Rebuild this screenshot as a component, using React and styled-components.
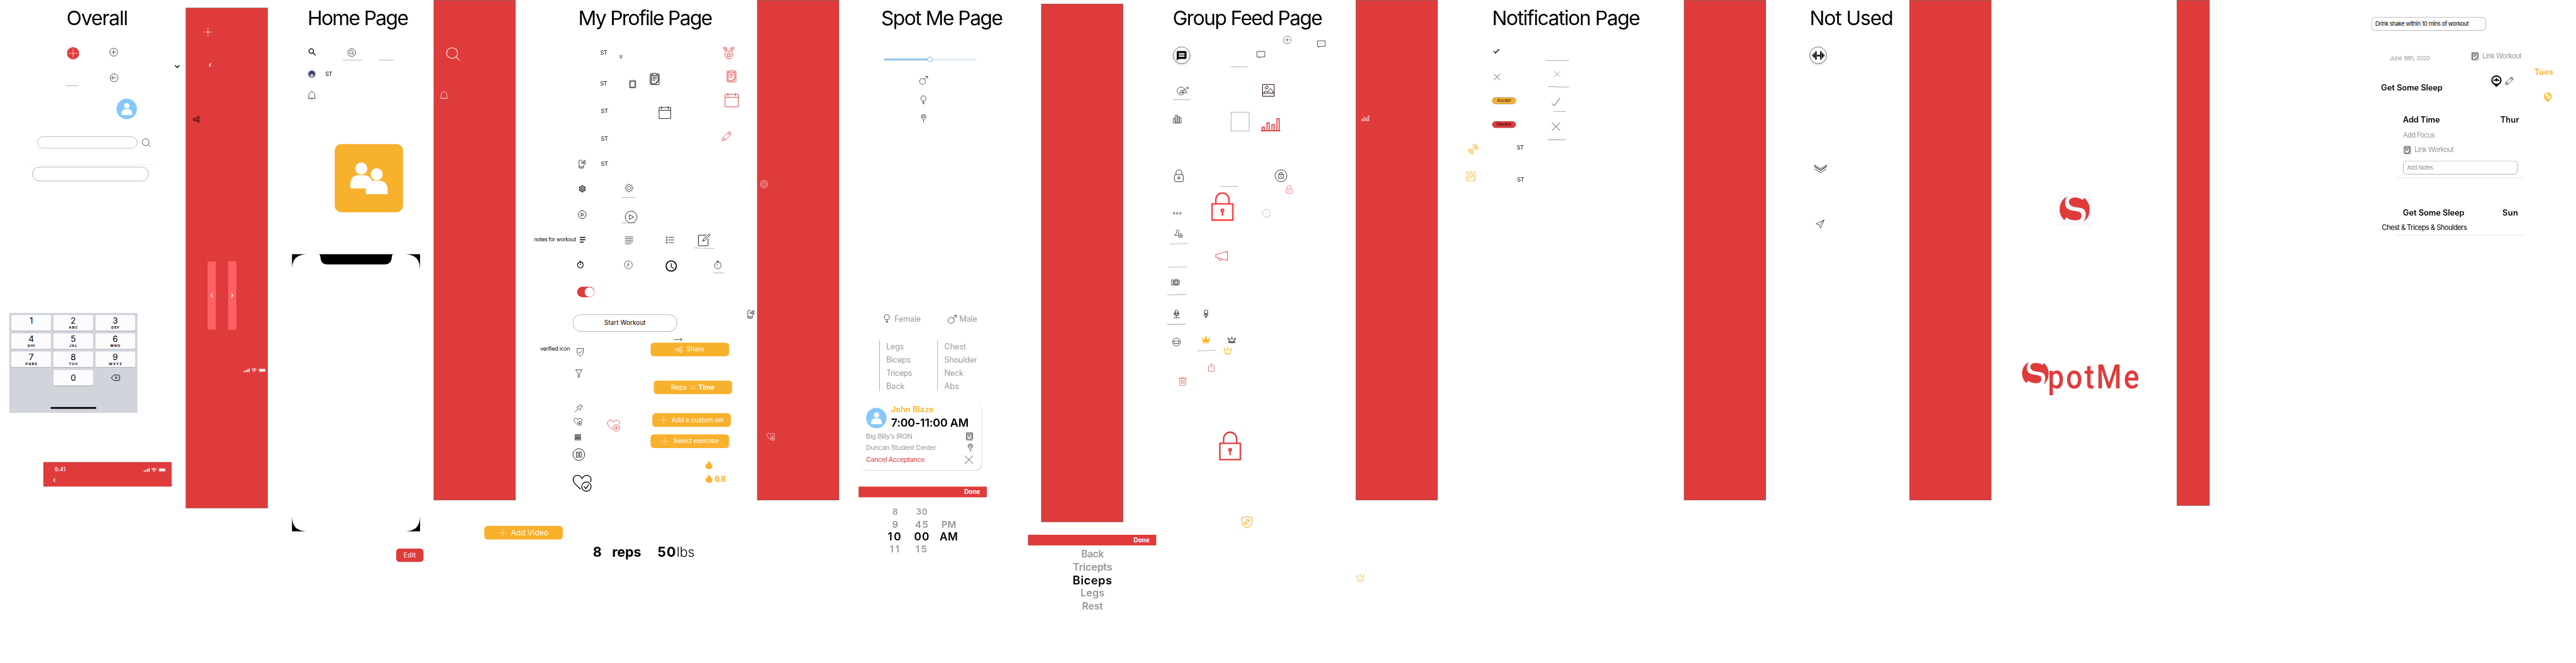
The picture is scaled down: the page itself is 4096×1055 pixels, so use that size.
import React, { useLayoutEffect, useRef, useState } from "react";
import styled, { createGlobalStyle } from "styled-components";
import { MdSearch, MdMessage, MdOutlineSettings, MdOutlineTimer } from "react-icons/md";

const SCALE = 4096 / 7543;
const RED = "#df3b3b";
const HOT = "#ff3b3b";
const GOLD = "#f8b12d";
const AMBER = "#fdb50a";
const GREY = "#979797";
const LINE = "#707070";
const SKY = "#85c8f9";

const Global = createGlobalStyle`
  html, body { margin: 0; padding: 0; background: #fff; overflow: hidden; }
  * { box-sizing: border-box; }
`;

const Window = styled.main`
  width: 4096px;
  height: 1055px;
  overflow: hidden;
  background: #fff;
`;

const Canvas = styled.div`
  position: relative;
  width: 7543px;
  height: 1942px;
  transform: scale(${SCALE});
  transform-origin: 0 0;
  font-family: Inter, "Liberation Sans", sans-serif;
  color: #000;
`;

/* ---------- text ---------- */

const Type = styled.span`
  display: inline-block;
  flex: none;
  white-space: pre;
  line-height: 1;
  font-family: ${(p) => p.$font || "inherit"};
  font-size: ${(p) => p.$size}px;
  font-weight: ${(p) => p.$weight};
  color: ${(p) => p.$color};
  transform-origin: 0 50%;
`;

const PlacedType = styled(Type)`
  position: absolute;
  left: ${(p) => p.$x - p.$size * 0.07}px;
  top: ${(p) => p.$base - p.$size * 0.864}px;
`;

/* A run of text tracked so that its letters span the width given. */
function Text({ x, base, size: nominal, w, weight = 400, color = "#000", font, children }) {
  const size = nominal * 1.03;
  const ref = useRef(null);
  const [tracking, setTracking] = useState(0);
  useLayoutEffect(() => {
    if (!w || children.length < 2) return;
    ref.current.style.letterSpacing = "0px";
    const natural = ref.current.getBoundingClientRect().width / SCALE;
    const next = (w + size * 0.13 - natural) / (children.length - 1);
    ref.current.style.letterSpacing = next + "px";
    setTracking(next);
  }, [w, size, children]);
  const Tag = x === undefined ? Type : PlacedType;
  return (
    <Tag ref={ref} $x={x} $base={base} $size={size} $weight={weight} $color={color} $font={font} style={{ letterSpacing: tracking }}>
      {children}
    </Tag>
  );
}

const Title = (p) => <Text size={57} base={74} {...p} />;
const ST = ({ x, base }) => <Text x={x} base={base} size={16.5} w={18.5}>ST</Text>;

/* ---------- shapes on the canvas ---------- */

const Placed = styled.div`
  position: absolute;
  left: ${(p) => p.$x}px;
  top: ${(p) => p.$y}px;
`;

const Band = styled(Placed)`
  width: ${(p) => p.$w || 240}px;
  height: ${(p) => p.$h || 1466}px;
  background: ${RED};
  border: 1px solid ${LINE};
`;

const Rule = styled(Placed)`
  width: ${(p) => p.$w}px;
  height: ${(p) => p.$t || 1}px;
  background: ${(p) => p.$c || LINE};
  transform: rotate(${(p) => p.$r || 0}deg);
`;

const Pill = styled(Placed)`
  display: flex;
  align-items: center;
  justify-content: ${(p) => p.$align || "center"};
  width: ${(p) => p.$w}px;
  height: ${(p) => p.$h}px;
  padding: ${(p) => p.$pad || 0};
  border: 1px solid ${(p) => p.$c || LINE};
  border-radius: ${(p) => p.$r}px;
  background: ${(p) => p.$bg || "#fff"};
`;

const Disc = styled(Placed)`
  width: ${(p) => p.$d}px;
  height: ${(p) => p.$d}px;
  border-radius: 50%;
  border: 1px solid #000;
  background: #fff;
  box-shadow: 0 3px 6px rgba(0, 0, 0, 0.16);
`;

const Lighter = styled(Placed)`
  display: flex;
  align-items: center;
  justify-content: center;
  width: 24px;
  height: 200px;
  background: #ff6262;
`;

const Glyph = styled.svg`
  position: ${(p) => (p.$flow ? "static" : "absolute")};
  left: ${(p) => p.$x}px;
  top: ${(p) => p.$y}px;
  width: ${(p) => p.$w}px;
  height: ${(p) => p.$h}px;
  flex: none;
  overflow: visible;
  fill: none;
  stroke: ${(p) => p.$c};
  stroke-width: ${(p) => p.$sw};
  color: ${(p) => p.$c};
`;

const PackIcon = styled(Placed)`
  display: flex;
  font-size: ${(p) => p.$s}px;
`;

function Icon({ of, x, y, w, h, c = "#000", sw = 1.1 }) {
  const [vw, vh, art] = of;
  return (
    <Glyph $flow={x === undefined} $x={x} $y={y} $w={w} $h={h} $c={c} $sw={sw * 1.15} viewBox={`0 0 ${vw} ${vh}`} preserveAspectRatio="none">
      {art}
    </Glyph>
  );
}

/* ---------- icon drawings: [width, height, art] ---------- */

const teeth = (n, outer, inner) => {
  const pts = [];
  for (let i = 0; i < n; i++) {
    [[-7, outer], [7, outer], [15, inner], [(360 / n) - 15, inner]].forEach(([d, r]) => {
      const a = ((i * 360) / n + d - 90) * (Math.PI / 180);
      pts.push(`${(12 + r * Math.cos(a)).toFixed(2)} ${(12 + r * Math.sin(a)).toFixed(2)}`);
    });
  }
  return "M" + pts.join("L") + "Z";
};

const gear = [24, 24, <g strokeLinejoin="round"><path d={teeth(8, 11.6, 8.7)} /><circle cx="12" cy="12" r="4.8" /></g>];
const plus = [24, 24, <path d="M12 0V24M0 12H24" />];
const cross = [24, 24, <path d="M0 0L24 24M24 0L0 24" />];
const tick = [24, 24, <path d="M.3 16L7 23.3L23.7 .3" />];
const boldTick = [18, 13, <path d="M1 7L6 12L17 1" />];
const chevLeft = [8, 12, <path d="M6.5 1L2 6L6.5 11" />];
const chevRight = [8, 12, <path d="M1.5 1L6 6L1.5 11" />];
const chevDown = [16, 10, <path d="M1.5 1.5L8 8L14.5 1.5" />];
const circlePlus = [24, 24, <g><circle cx="12" cy="12" r="11.5" /><path d="M12 5.5V18.5M5.5 12H18.5" /></g>];
const circleBack = [24, 24, <g><circle cx="12" cy="12" r="11.5" /><path d="M18.5 12H5M9.5 6.5L5 12L9.5 17.5" /></g>];
const mag = [26, 26, <g><circle cx="11" cy="11" r="10.4" /><path d="M18.5 18.5L25.5 25.5" /></g>];
const circleMag = [24, 24, <g><circle cx="12" cy="12" r="11.5" /><circle cx="11" cy="11.3" r="5.3" /><path d="M15 15.3L18.7 18.5" /></g>];
const share = [20, 20, <g><circle cx="4.5" cy="10.5" r="3.6" /><circle cx="15.5" cy="4.6" r="3.6" /><circle cx="15.5" cy="15.6" r="3.6" /><path d="M7.8 9L12.2 6.5M7.8 12L12.2 14" /></g>];
const bell = [24, 24, <path d="M0 20.8H24M2 20.8C4.2 19.5 3.5 15 3.5 11C3.5 6.5 6.5 4 9.5 3Q10 .6 12 .6Q14 .6 14.5 3C17.5 4 20.5 6.5 20.5 11C20.5 15 19.8 19.5 22 20.8M9 21Q9.5 23.5 12 23.5Q14.5 23.5 15 21" />];
const board = [28, 36, (
  <g>
    <path d="M9 3H3Q1 3 1 5V33Q1 35 3 35H25Q27 35 27 33V5Q27 3 25 3H19" />
    <path d="M8 6.8H4.3V31.7H18.5L24 26V6.8H20M18.5 31.7V27.5Q18.5 26 20 26H24" />
    <path d="M8 8.5V5.5Q8 4 10 4H11Q11.5 .8 14 .8Q16.5 .8 17 4H18Q20 4 20 5.5V8.5Z" />
    <path d="M7.5 13H20.5M7.5 17.5H20.5M7.5 22H15.5" />
  </g>
)];
const blankBoard = [20, 24, <g><path d="M6 2H2Q.7 2 .7 3.3V22.3Q.7 23.4 2 23.4H18Q19.3 23.4 19.3 22.3V3.3Q19.3 2 18 2H14" /><path d="M2.6 4.5H17.4V21.3H2.6ZM6.5 3Q8 3 8.5 1.5Q10 -.2 11.5 1.5Q12 3 13.5 3" /></g>];
const calendar = [40, 40, <path d="M1 3.2H39V39H1ZM1 12.3H39M9 0V9.5M31 0V9.5" />];
const pencil = [24, 24, <path strokeLinejoin="round" d="M.7 23.3L2.3 15.5L16.5 1.8Q18.5 0 20.5 1.7L22.3 3.5Q24 5.5 22.3 7.3L8.3 21.5ZM2.3 15.5Q4.5 15.5 4.8 18.8Q8 19 8.3 21.5M14.5 3.8L20.2 9.4M16 2.3L21.8 8" />];
const phoneShare = [20, 24, <g><path d="M9.5 .6H2.2Q.7 .6 .7 2.1V21.9Q.7 23.4 2.2 23.4H12.5Q14 23.4 14 21.9V14.5M.7 19.2H14M6.4 21.4H8.4" /><circle cx="10" cy="7.5" r="2.6" /><circle cx="17" cy="3.2" r="2.4" /><circle cx="17" cy="10.3" r="2.4" /><path d="M12.2 6L15 4.6M12.2 8.6L14.8 9.6" /></g>];
const medal = [34, 36, <g><path d="M.8 .5L7 14M4.8 .5L10 12M8.8 .5L12.8 10.5M33.2 .5L27 14M29.2 .5L24 12M25.2 .5L21.2 10.5" /><circle cx="17" cy="24" r="11.2" /><path d="M17 17.5L19 21.8L23.3 22.2L20 25.4L21 30L17 27.6L13 30L14 25.4L10.7 22.2L15 21.8Z" /></g>];
const play = [36, 36, <g strokeLinejoin="round"><circle cx="18" cy="18" r="17.2" /><path d="M13 11V25L26 18Z" /></g>];
const textLines = [24, 22, <path d="M0 1H24M0 6H24M0 11H24M0 16H24M0 21.3H18" />];
const barLines = [16, 17, <path d="M0 1.6H16M0 8.5H16M0 15.4H11" />];
const bullets = [24, 20, <g><circle cx="2.3" cy="2.3" r="1.9" /><circle cx="2.3" cy="10.2" r="1.9" /><circle cx="2.3" cy="18" r="1.9" /><path d="M8 2.3H24M8 10.2H24M8 18H24" /></g>];
const note = [36, 37, <g strokeLinejoin="round"><path d="M23.5 4.2H4Q1 4.2 1 7.2V33Q1 36 4 36H26.5Q29.5 36 29.5 33V15.5" /><path d="M13.8 22.5L16 15.5L30.5 2.5Q32.5 .5 34.2 1.5Q36 3 34.3 5.5L20 19.8Z" /></g>];
const clockThin = [24, 24, <g><circle cx="12" cy="12" r="11.5" /><circle cx="12" cy="12" r="1.6" /><path d="M12 5.5V10.4M10.8 13.2L6 18.5" /></g>];
const clockBold = [32, 32, <g><circle cx="16" cy="16" r="14.5" /><path strokeWidth="2.2" strokeLinecap="round" d="M16 9V18L22.5 22.5" /></g>];
const stopwatch = [20, 24, <g><circle cx="10" cy="14" r="9.5" /><path d="M6.5 .8H13.5M8.3 .8V4.5M11.7 .8V4.5M17 6.5L19 4.8M10 14L5.5 9.5" /></g>];
const arrow = [24, 12, <path d="M0 6H23.3M18 .8L23.3 6L18 11.2" />];
const shield = [20, 24, <path d="M.8 1.2H19.2V9Q19.2 20 10 23.5Q.8 20 .8 9ZM5 12L8.5 15.3L15 7.5" />];
const funnel = [20, 24, <path strokeLinejoin="round" d="M.6 .8H19.4L12 12V21L8 23.3V12Z" />];
const pushpin = [24, 24, <path strokeLinejoin="round" d="M.5 23.5L9.5 14M16.5 .7L23.3 7.5Q21 8.5 19.8 8L17 11.5Q18.5 16 15.5 18.5L5.8 9Q9 6 13 7.3L16 4Q15 2.5 16.5 .7Z" />];
const heart = "M9.8 18.5L2.3 11C-1 7 .8 .8 6 .8C9 .8 10.8 2.5 12 5C13.2 2.5 15 .8 18 .8C22.5 .8 24.3 5.5 23 9";
const heartPlus = [24, 22, <g><path d={heart} /><circle cx="17.3" cy="15.5" r="6" /><path d="M17.3 12V19M13.8 15.5H20.8" /></g>];
const heartTick = [24, 22, <g strokeLinecap="round"><path d={heart} /><circle cx="17.5" cy="15.4" r="6" /><path d="M14.8 15.6L16.8 18L20.3 13" /></g>];
const stack = [18, 17, <path d="M.6 .6H17.4V3H.6ZM.6 5.2H17.4V7.2H.6ZM.6 9.5H17.4V11.5H.6ZM.6 13.8H17.4V16.3H.6Z" />];
const pause = [36, 36, <g><circle cx="18" cy="18" r="17.2" /><path d="M11 10.5H16V26H11ZM20 10.5H25V26H20Z" /></g>];
const flame = [20, 24, <path stroke="none" fill="currentColor" d="M5.8 0C12.5 1.5 16.8 6 16.3 11.5Q18 11.3 18.8 9.5Q20 11.8 20 14.5C20 20.5 15.5 24 10 24C4.5 24 0 20.5 0 15C0 11.5 1.6 9.2 3.6 7.6C3.8 9 4.6 10 5.6 10C7.5 7.5 7.8 4 5.8 0Z" />];
const swap = [16, 15, <path d="M1 4.5H16M5 .5L1 4.5M0 11H15M11 7.5L15 11L11 14.5" />];
const female = [16, 26, <g><circle cx="8" cy="8.5" r="7.4" /><path d="M8 16V26M4 21.5H12" /></g>];
const male = [25, 25, <g><circle cx="9.3" cy="15.7" r="8.7" /><path d="M15.5 9.5L24.3 .7M17 .7H24.3V8" /></g>];
const mapPin = [15, 24, <g><path d="M7.5 24V17.5Q.7 11 .7 7.2A6.8 6.5 0 0 1 14.3 7.2Q14.3 11 7.5 17.5" /><circle cx="7.5" cy="7.2" r="3.3" /></g>];
const chat = [24, 21, <path d="M.6 .6H23.4V17H11L8 20.4V17H.6Z" fill="#f8f9ff" />];
const chatDots = [24, 21, <g><path d="M.6 .6H23.4V16.5H7L3.5 20.4V16.5H.6Z" /><path strokeDasharray="1.5 2.7" d="M6.5 8.5H17" /></g>];
const hills = [32, 24, <g><path d="M19 20A11.3 11.5 0 1 1 18.5 4.5" /><path d="M6 18L11.5 9.5L17 18ZM14 18.2L20.5 5L27.5 18.2Z M17.5 11L20.5 12L23 10.5" /><circle cx="29" cy="3.7" r="2.7" /></g>];
const picture = [36, 36, <g><path d="M.9 .9H35.1V35.1H.9ZM.9 25.8H35.1" /><path d="M5 25.5Q10 14.5 15 22.5Q17 24 18.5 20Q24 8.5 28 16Q31 22 32.5 25.5M9 12.5Q7 8 11 7.5Q13.5 4 17 6.5Q19 11 15.5 12.8Z" /></g>];
const columns = [24, 24, <path d="M.6 9.5H6V23.4H.6ZM6.5 .6H12V23.4H6.5ZM12 3.7H17.5V23.4H12ZM18.3 7.5H23.4V23.4H18.3Z" />];
const chart = [57, 39, <path d="M0 37.3H57M4 37V26.5H10V37M18 37V14H24.5V37M32.5 37V19H39V37M47 37V1.5H53.5V37" />];
const roundLock = [28, 36, <g><rect x=".8" y="14.5" width="26.4" height="20.7" rx="5" /><path d="M5.5 14.5V8.5Q6 .8 14 .8Q22 .8 22.5 8.5V14.5" /><circle cx="14" cy="24.5" r="3" strokeWidth="1.8" /></g>];
const circleLock = [36, 36, <g><circle cx="18" cy="18" r="17.2" /><path d="M11 14H25V25.5H11ZM13.5 14Q13 8 18 8Q23 8 22.5 14M18 17V22" /></g>];
const lock = [64, 84, <g><path d="M2 34.5H62V82H2ZM13 33V22a19 19.5 0 0 1 38 0V33" /><circle cx="32" cy="53.5" r="3.5" /><path d="M32 57V69" /></g>];
const ellipsis = [24, 6, <g><circle cx="3" cy="3" r="2.5" /><circle cx="12" cy="3" r="2.5" /><circle cx="21" cy="3" r="2.5" /></g>];
const circleTick = [24, 24, <g><circle cx="12" cy="12" r="11.5" /><path stroke="#e8e8e8" d="M5 13L9 17.5L19 7" /></g>];
const personPlus = [24, 24, <g><path d="M11 17H.6C.3 12.5 6.5 13 7 10.5C5.5 8.5 5 5.5 5.5 3.5C6 -.3 12 -.3 12.3 3.5C12.5 6 12 8.5 10.8 10.2Q11 12 12.5 12.5" /><circle cx="17.5" cy="17.7" r="6" /><path d="M17.5 14.5V21M14.3 17.7H20.7" /></g>];
const megaphone = [36, 30, <path d="M1 10V20M1 11L35 2M1 18.5L35 28M35 0V30M8 21Q8 28.5 13.5 28.5Q18 28.5 19 24" />];
const camera = [24, 19, <g><path d="M.6 3H5.5V18.4H.6ZM7 4.5H9.5L11 1H17L18.5 4H23.4V17L20 18.4H7L5.5 17" /><circle cx="14" cy="11" r="6.5" /><circle cx="14" cy="11" r="4.3" /></g>];
const mic = [18, 24, <path d="M4 12V6Q4.5 .6 9 .6Q13.5 .6 14 6V12Q13.5 15 9 15Q4.5 15 4 12ZM4 6.5H8M10 6.5H14M4 9H8M10 9H14M2 9V12Q2.5 17.5 9 17.5Q15.5 17.5 16 12V9M9 17.5V23M0 23.3H18M1 11.5H17" />];
const micSlim = [12, 24, <path d="M.8 2Q6 -.8 11.2 2V11H.8ZM.8 11V17Q3 20 4 20H8Q10 19 11.2 17V11M4 12H8V16Q6 17.5 4 16ZM4 20V22L6 23.5L8 22V20" />];
const circleCrown = [24, 24, <g><circle cx="12" cy="12" r="11.5" /><path d="M5 16.5V8L8 10.5L12 7.5L16 10.5L19 8V16.5Z" /></g>];
const crownFull = [24, 22, <g stroke="none" fill="currentColor"><circle cx="2" cy="5.3" r="2" /><circle cx="12" cy="2.9" r="2.8" /><circle cx="22" cy="5.3" r="2" /><path d="M1.5 7L3.5 18H20.5L22.5 7Q18.5 11.5 16 9.5Q13 8 12 4Q11 8 8 9.5Q5.5 11.5 1.5 7ZM3.5 19.8H20.5V21.6H3.5Z" /></g>];
const crownLine = [24, 18, <g strokeLinejoin="round"><path d="M2.5 5.5L4 14.5H20L21.5 5.5L16.5 10L12 4L7.5 10ZM3 14.7H21V17.4H3Z" /><circle cx="1.8" cy="4.5" r="1.3" /><circle cx="12" cy="2.2" r="1.6" /><circle cx="22.2" cy="4.5" r="1.3" /></g>];
const crownSoft = [24, 22, <g><path d="M2.5 6.5L4 18H20L21.5 6.5Q20 11 17 11Q13 10.5 12 4.5Q11 10.5 7 11Q4 11 2.5 6.5ZM3.5 21H20.5" /><circle cx="1.8" cy="5" r="1.5" /><circle cx="12" cy="2.5" r="2" /><circle cx="22.2" cy="5" r="1.5" /></g>];
const upload = [18, 24, <path d="M5.5 8H.6V23.4H17.4V8H12.5M9 13V1M4.5 5L9 .8L13.5 5" />];
const trash = [24, 24, <path d="M0 3.5H24M7.5 3.5V.6H16.5V3.5M3.5 3.5V23.4H20.5V3.5M8 7.5V19M12 7.5V19M16 7.5V19" />];
const dumbbellArt = <g transform="rotate(-43 15 15)" strokeLinejoin="round"><rect x="3" y="5.5" width="3.4" height="19" rx="1.5" /><rect x="6.4" y="7" width="3.2" height="16" rx="1" /><rect x="-.3" y="9" width="3.3" height="12" rx="1.5" /><path d="M9.6 13.3H20.4M9.6 16.7H20.4" /><rect x="20.4" y="7" width="3.2" height="16" rx="1" /><rect x="23.6" y="5.5" width="3.4" height="19" rx="1.5" /><rect x="27" y="9" width="3.3" height="12" rx="1.5" /></g>;
const dumbbell = [30, 30, dumbbellArt];
const barbell = [37, 25, <g stroke="none" fill="currentColor"><rect x="9.3" y="0" width="4.2" height="25" rx="1.6" /><rect x="23.8" y="0" width="4.2" height="25" rx="1.6" /><rect x="4.3" y="5.5" width="4" height="14" rx="1.5" /><rect x="28.8" y="5.5" width="4" height="14" rx="1.5" /><path d="M3.6 9.5Q0 10.5 0 13Q0 15 3.6 16ZM33.4 9.5Q37 10.5 37 13Q37 15 33.4 16Z" /><rect x="14.5" y="10.5" width="8.3" height="5" /></g>];
const figure = (x, y) => <g key={x} transform={`translate(${x} ${y})`}><circle cx="4.5" cy="3.4" r="2.9" /><path d="M2.5 7.5Q.6 8.5 .6 11V14Q.8 15.2 1.8 14.5L3 20.5H6L7.2 14.5Q8.2 15.2 8.4 14V11Q8.4 8.5 6.5 7.5" /></g>;
const crew = [30, 30, <g>{figure(0.2, 1.8)}{figure(10.6, 0)}{figure(20.8, 1.8)}<path d="M8 25.3Q.6 25.5 .6 27Q2 29.4 15 29.4Q28 29.4 29.4 27Q29.4 25.5 22 25.3" /></g>];
const ranks = [36, 24, <path d="M.7 .8V5L18 16L35.3 5V.8L18 11.5ZM.7 5.5L18 16.5L35.3 5.5M.7 12L18 23L35.3 12" />];
const plane = [25, 25, <path strokeLinejoin="round" d="M.6 11.5L24.4 .6L14 24.4L10 16ZM10 16L24.4 .6" />];
const pinBlack = [30, 34, <g stroke="none"><path fill="currentColor" d="M15 0A15 14.5 0 0 1 30 14.5Q30 22 22 27L15 34L8 27Q0 22 0 14.5A15 14.5 0 0 1 15 0Z" /><ellipse cx="15" cy="14" rx="11.5" ry="10.5" fill="#fff" /><path fill="currentColor" d="M13.5 7.5H16.5V10L20 12.5H22Q24 12.5 24 15Q23 17 21 16L20 14.5L18 14V17H12V14L10 14.5L9 16Q7 17 6 15Q6 12.5 8 12.5H10L13.5 10Z" /></g>];
const pinGold = [24, 28, <g><path fill="currentColor" stroke="none" d="M12 0A12 11.8 0 0 1 24 11.8Q24 18 17.5 22.5L12 28L6.5 22.5Q0 18 0 11.8A12 11.8 0 0 1 12 0Z" /><circle cx="12" cy="11.8" r="9" fill="#fff" stroke="none" /><g transform="translate(4.2 4) scale(.52)" strokeWidth="2">{dumbbellArt}</g></g>];
const shieldGold = [30, 34, <g><path d="M1 4Q9 5 15 1Q21 5 29 4V16Q28 27 15 33Q2 27 1 16Z" /><g transform="translate(6.5 8) scale(.56)">{dumbbellArt}</g></g>];
const backspace = [26, 18, <path strokeLinejoin="round" d="M9 1H22.5Q25 1 25 3.5V14.5Q25 17 22.5 17H9Q8 17 7 16L1 9L7 2Q8 1 9 1ZM11.5 5.5L18.5 12.5M18.5 5.5L11.5 12.5" />];
const person = [31, 35, <g fill="#fff" stroke="none"><circle cx="15.5" cy="8" r="8" /><path d="M0 35V29Q1 18.5 10 18H21Q30 18.5 31 29V35Z" /></g>];
const pair = [109, 91, <g fill="#fff" stroke="none"><circle cx="32" cy="17.5" r="17.6" /><path d="M0 75V61Q1 38 24 37H40Q58 38 63 54Q66 53 70 53H85Q108 55 109 77V92H45V75Z" /><circle cx="77" cy="34.5" r="17.6" /></g>];
const emblem = [88, 74, <g fill="currentColor" stroke="none"><path d="M22.3 0C8 6 0 21 0 38C0 50 5 60 13.5 69L20 61.3C27 67 36 69.6 44 69.6C57 69.6 63.8 66 63.8 56C63.8 47 60 44.5 50 43C38 41.2 27 39.5 22 35C14 28 14 10 22.3 0Z" /><path d="M27.4 15C27.4 8 34 2.8 46 2.8C54 2.8 61 5 66.8 9.6L72.5 4C82 12 88 24 88 38C88 54 81 67 69.5 73.7C75.5 67 77.5 55 76 48C74 37 68 34 55 32.3C40 30 27.4 28 27.4 15Z" /></g>];
const status = [67, 12, (
  <g fill="#fff" stroke="none">
    <rect x="0" y="7.5" width="3" height="4" rx=".8" /><rect x="4.7" y="5.5" width="3" height="6" rx=".8" /><rect x="9.4" y="3" width="3" height="8.5" rx=".8" /><rect x="14.1" y=".5" width="3" height="11" rx=".8" />
    <g fill="none" stroke="#fff" strokeWidth="2"><path d="M22.7 4.3Q30 -2 37.3 4.3M25.5 7.2Q30 3.5 34.5 7.2" /></g>
    <path d="M27.5 9.3Q30 7.5 32.5 9.3L30 11.8Z" />
    <rect x="43" y=".7" width="21" height="10.6" rx="2.7" fill="none" stroke="#fff" strokeWidth="1" strokeOpacity=".4" /><rect x="44.7" y="2.4" width="17.6" height="7.2" rx="1.4" /><path d="M65.5 4Q67 6 65.5 8Z" fillOpacity=".5" />
  </g>
)];
const phoneFrame = [375, 812, (
  <g fill="#000" stroke="none">
    <path d="M0 0H50C14 0 0 13 0 48ZM375 0H325C361 0 375 13 375 48ZM0 812H50C14 812 0 799 0 764ZM375 812H325C361 812 375 799 375 764Z" />
    <path d="M77 0Q83 .5 83 7C84 23 90 30 104 30H271C285 30 291.5 23 292.5 7Q292.5 .5 298 0Z" />
  </g>
)];
const face = [24, 24, (
  <g stroke="none">
    <circle cx="12" cy="12" r="11.6" fill="#c9d6e2" stroke="#555" strokeWidth=".6" /><circle cx="12" cy="12" r="9.3" fill="#1638b8" />
    <path d="M7.5 12H16.5V17Q12 23 7.5 17Z" fill="#dcb594" /><path d="M7 13Q6.5 6 12 6Q17.5 6 17 13L15 10.5H9Z" fill="#6b3f1d" /><path d="M9 17.5H15V20Q12 21.5 9 20Z" fill="#e8dcc8" />
  </g>
)];

/* ---------- composite parts ---------- */

const AvatarDisc = styled.div`
  display: flex;
  align-items: center;
  justify-content: center;
  flex: none;
  width: 60px;
  height: 60px;
  border-radius: 50%;
  background: ${SKY};
`;
const Avatar = () => <AvatarDisc><Icon of={person} w={31} h={35} /></AvatarDisc>;

const PadGrid = styled(Placed)`
  display: grid;
  grid-template-columns: repeat(3, 117px);
  grid-template-rows: repeat(4, 46px);
  gap: 7.7px 6px;
  width: 375px;
  height: 291px;
  padding: 6px;
  background: #d1d4db;
`;
const Key = styled.div`
  display: flex;
  flex-direction: column;
  align-items: center;
  justify-content: ${(p) => (p.$mid ? "center" : "flex-start")};
  gap: 1px;
  padding-top: ${(p) => (p.$mid ? 0 : 4)}px;
  border-radius: 5px;
  background: ${(p) => (p.$clear ? "none" : "#fcfcfe")};
  box-shadow: ${(p) => (p.$clear ? "none" : "0 1px 0 #898a8d")};
`;
const Digit = styled.span`
  font-size: 25px;
  line-height: 25px;
`;
const Letters = styled.span`
  font-size: 10px;
  line-height: 12px;
  font-weight: 700;
  letter-spacing: 2px;
  margin-right: -2px;
`;
const HomeBar = styled.div`
  grid-column: 1 / 4;
  justify-self: center;
  width: 134px;
  height: 5px;
  margin-top: 55px;
  border-radius: 3px;
  background: #000;
`;
const PAD = [["1", ""], ["2", "ABC"], ["3", "DEF"], ["4", "GHI"], ["5", "JKL"], ["6", "MNO"], ["7", "PQRS"], ["8", "TUV"], ["9", "WXYZ"]];

function Keypad({ x, y }) {
  return (
    <PadGrid $x={x} $y={y}>
      {PAD.map(([d, l]) => <Key key={d}><Digit>{d}</Digit>{l && <Letters>{l}</Letters>}</Key>)}
      <Key $clear />
      <Key $mid><Digit>0</Digit></Key>
      <Key $clear $mid><Icon of={backspace} w={26} h={18} sw={1.5} /></Key>
      <HomeBar />
    </PadGrid>
  );
}

const HeaderBar = styled(Placed)`
  display: flex;
  flex-direction: column;
  justify-content: space-between;
  width: 375px;
  height: 70px;
  padding: 15px 14px 11px 28px;
  background: ${RED};
`;
const HeaderRow = styled.div`
  display: flex;
  align-items: center;
  justify-content: space-between;
  padding-left: ${(p) => p.$in || 0}px;
`;

const Action = styled(Placed)`
  display: flex;
  align-items: center;
  justify-content: center;
  gap: ${(p) => p.$gap || 12}px;
  width: 230px;
  height: 40px;
  border-radius: 10px;
  background: ${GOLD};
`;

const EditButton = styled(Placed)`
  display: flex;
  align-items: center;
  justify-content: center;
  width: 80px;
  height: 40px;
  border-radius: 10px;
  background: ${RED};
`;

const Tile = styled(Placed)`
  display: flex;
  align-items: center;
  justify-content: center;
  width: 200px;
  height: 200px;
  border-radius: 20px;
  background: ${GOLD};
`;

const Switch = styled(Placed)`
  display: flex;
  align-items: center;
  justify-content: flex-end;
  width: 51px;
  height: 31px;
  padding: 1.5px;
  border-radius: 16px;
  background: ${RED};
`;
const Knob = styled.div`
  width: 28px;
  height: 28px;
  border-radius: 50%;
  background: #fff;
  box-shadow: -1px 1px 3px rgba(0, 0, 0, 0.15);
`;

const Slider = styled(Placed)`
  display: flex;
  align-items: center;
  width: 270px;
  height: 16px;
`;
const Track = styled.div`
  width: ${(p) => p.$w}px;
  height: 5px;
  border-radius: 3px;
  background: ${(p) => p.$c};
  box-shadow: 0 0 3px 2px #eef3f8;
`;
const Thumb = styled.div`
  width: 16px;
  height: 16px;
  margin: 0 -4px;
  z-index: 1;
  border-radius: 50%;
  background: #fff;
  border: 2px solid #7fb6e8;
`;

const MuscleColumn = styled(Placed)`
  display: grid;
  grid-auto-rows: 38.85px;
  align-items: center;
  justify-items: start;
  height: 149px;
  padding-left: ${(p) => p.$pad}px;
  border-left: 1px solid ${LINE};
`;

const Card = styled(Placed)`
  width: 357px;
  height: 200px;
  padding: 0 25px 0 19px;
  border-radius: 20px;
  background: #fff;
  box-shadow: 1.5px 1.5px 1px rgba(0, 0, 0, 0.2);
`;
const CardHead = styled.div`
  display: flex;
  align-items: flex-end;
  gap: 13px;
  height: 77px;
  margin-bottom: 6px;
`;
const Who = styled.div`
  display: flex;
  flex-direction: column;
  align-items: flex-start;
  gap: 10px;
`;
const CardRow = styled.div`
  display: flex;
  align-items: center;
  justify-content: space-between;
  height: 34.3px;
`;

const DoneBar = styled(Placed)`
  display: flex;
  align-items: center;
  justify-content: flex-end;
  width: 375px;
  height: 30.5px;
  padding: 2px 19px 0 0;
  background: ${RED};
`;
const Done = ({ x, y }) => <DoneBar $x={x} $y={y}><Text size={17.5} w={44} weight={700} color="#fff">Done</Text></DoneBar>;

const Wheel = styled(Placed)`
  display: flex;
  gap: 0;
`;
const WheelColumn = styled.div`
  display: grid;
  grid-template-columns: 78.5px;
  grid-auto-rows: 36.4px;
  place-items: center;
  padding-top: ${(p) => p.$skip * 36.4}px;
`;
const WheelList = styled(Placed)`
  display: grid;
  grid-template-columns: 200px;
  grid-template-rows: 28px repeat(5, 38.3px);
  place-items: center;
`;

const TIMES = [
  [0, ["8", 24], ["9", 27], ["10", 31, 35], ["11", 27, 24.5]],
  [0, ["30", 24, 30], ["45", 27, 34.5], ["00", 31, 40], ["15", 27, 30]],
  [1, ["PM", 27, 39.5], ["AM", 31, 49]],
];
const MUSCLES = [["Chest", 27, 70], ["Back", 28, 63], ["Tricepts", 29.5, 112], ["Biceps", 33, 111], ["Legs", 29, 66], ["Rest", 28, 57.5]];

/* ---------- pages ---------- */

function Overall() {
  return (
    <>
      <Title x={199} w={173}>Overall</Title>
      <Glyph $x={196} $y={138} $w={36} $h={36} $c="#fff" $sw={1.3} viewBox="0 0 36 36"><circle cx="18" cy="18" r="18" fill={RED} stroke="none" /><path d="M18 4.5V31.5M4.5 18H31.5" /></Glyph>
      <Icon of={circlePlus} x={321} y={141} w={24} h={24} />
      <Icon of={chevDown} x={511} y={190} w={16} h={10} sw={2.5} />
      <Icon of={circleBack} x={322} y={216} w={24} h={24} />
      <Rule $x={191} $y={251} $w={40} />
      <Placed $x={341} $y={289}><Avatar /></Placed>
      <Pill $x={109} $y={400} $w={293} $h={35} $r={18} $c="#8c8c8c" />
      <Icon of={mag} x={416} y={406} w={25} h={25} />
      <Rule $x={80.5} $y={480.5} $w={376} $c="#e4e4e4" />
      <Pill $x={95} $y={489} $w={340} $h={42} $r={20} />
      <Keypad x={27} y={917} />
      <HeaderBar $x={127} $y={1354}>
        <HeaderRow $in={5}><Text size={15} w={30} weight={500} color="#fff">9:41</Text><Icon of={status} w={67} h={12} /></HeaderRow>
        <HeaderRow><Icon of={chevLeft} w={8} h={12} c="#fff" sw={2} /></HeaderRow>
      </HeaderBar>
      <Band $x={544} $y={23} />
      <Icon of={plus} x={597} y={81.5} w={24} h={24} c="#fff" sw={1.1} />
      <Icon of={chevLeft} x={611} y={185} w={8} h={12} c="#fff" sw={2} />
      <Icon of={share} x={565} y={340} w={20} h={19} sw={1.5} />
      <Lighter $x={608} $y={766}><Icon of={chevLeft} w={8} h={12} c="#fff" sw={2} /></Lighter>
      <Lighter $x={668} $y={766}><Icon of={chevRight} w={8} h={12} c="#fff" sw={2} /></Lighter>
      <Icon of={status} x={714} y={1079} w={67} h={12} />
    </>
  );
}

function Home() {
  return (
    <>
      <Title x={904.5} w={289}>Home Page</Title>
      <PackIcon $x={900} $y={138} $s={29}><MdSearch /></PackIcon>
      <Icon of={circleMag} x={1018} y={142} w={24} h={24} />
      <Rule $x={1004} $y={176} $w={56} />
      <Rule $x={1109} $y={176} $w={44} />
      <Icon of={face} x={901} y={205} w={24} h={24} />
      <ST x={953.6} base={223} />
      <Icon of={bell} x={901} y={267} w={24} h={24} />
      <Tile $x={980} $y={422}><Icon of={pair} w={109} h={92} /></Tile>
      <Icon of={phoneFrame} x={855} y={745} w={375} h={812} />
      <EditButton $x={1160} $y={1607}><Text size={18.5} w={33} color="#fff">Edit</Text></EditButton>
      <Band $x={1270} $y={0} />
      <Icon of={mag} x={1307} y={139} w={40} h={39} c="#fff" sw={1.1} />
      <Icon of={bell} x={1288} y={267} w={24} h={24} c="#fff" />
    </>
  );
}

function Profile() {
  return (
    <>
      <Title x={1697.5} w={386}>My Profile Page</Title>
      <ST x={1759} base={161} />
      <ST x={1759} base={252} />
      <ST x={1761} base={333} />
      <ST x={1761} base={414} />
      <ST x={1761} base={487} />
      <Icon of={medal} x={1813} y={160.5} w={10} h={10.5} sw={2} />
      <Icon of={medal} x={2117} y={137} w={34} h={36} c={RED} sw={1.5} />
      <Icon of={blankBoard} x={1842.5} y={234} w={19} h={24} sw={1.2} />
      <Icon of={board} x={1903} y={213} w={28} h={36} sw={1.5} />
      <Icon of={board} x={2128} y={205} w={28} h={36} c={RED} sw={1.5} />
      <Icon of={calendar} x={2122} y={273} w={41} h={41} c={RED} sw={1.5} />
      <Icon of={calendar} x={1929} y={312} w={36} h={36} sw={1.5} />
      <Icon of={pencil} x={2114} y={385} w={28} h={28} c={RED} sw={1.1} />
      <Icon of={phoneShare} x={1695} y={469} w={20} h={24} sw={1.2} />
      <PackIcon $x={1692.5} $y={541} $s={24.5}><MdOutlineSettings /></PackIcon>
      <Icon of={gear} x={1830} y={539} w={24} h={24} sw={1} />
      <Rule $x={1820} $y={578} $w={40} />
      <Icon of={play} x={1693} y={617} w={24} h={24} sw={2} />
      <Icon of={play} x={1830} y={618} w={36} h={36} sw={1.3} />
      <Rule $x={1820} $y={653} $w={40} />
      <Text x={1565} base={709} size={15.5} w={121}>notes for workout</Text>
      <Icon of={barLines} x={1697.5} y={694} w={16} h={17} sw={2.6} />
      <Icon of={textLines} x={1830} y={692.5} w={24} h={22} sw={1.1} />
      <Icon of={bullets} x={1950} y={693} w={24} h={20} sw={1.2} />
      <Icon of={note} x={2044} y={685} w={36} h={36} sw={1.5} />
      <Rule $x={2031} $y={726.5} $w={61} $r={1} />
      <PackIcon $x={1687} $y={763} $s={25}><MdOutlineTimer /></PackIcon>
      <Icon of={clockThin} x={1828} y={764} w={24} h={24} sw={1} />
      <Icon of={clockBold} x={1949} y={763} w={33} h={33} sw={2.8} />
      <Icon of={stopwatch} x={2092} y={764} w={20} h={24} />
      <Rule $x={2088} $y={799} $w={32} />
      <Switch $x={1690} $y={840}><Knob /></Switch>
      <Pill $x={1677} $y={921} $w={306} $h={51} $r={25}><Text size={18} w={119}>Start Workout</Text></Pill>
      <Icon of={phoneShare} x={2189} y={909} w={20} h={24} sw={1.2} />
      <Icon of={arrow} x={1974} y={989} w={24} h={12} />
      <Text x={1583} base={1028.5} size={15.5} w={85}>verified icon</Text>
      <Icon of={shield} x={1689} y={1020} w={20} h={24} />
      <Icon of={funnel} x={1685} y={1083} w={20} h={24} />
      <Icon of={pushpin} x={1683} y={1184} w={24} h={24} />
      <Icon of={heartPlus} x={1680} y={1224.5} w={24} h={22} />
      <Icon of={heartPlus} x={1778} y={1230} w={37} h={34} c={RED} sw={0.9} />
      <Icon of={stack} x={1683} y={1273} w={18} h={17} />
      <Icon of={pause} x={1677} y={1314} w={36} h={36} sw={1.4} />
      <Icon of={heartTick} x={1677} y={1391} w={55} h={50} sw={0.95} />
      <Action $x={1905} $y={1004}><Icon of={share} w={20} h={19} c="#fff" sw={1.6} /><Text size={18.5} w={49} color="#fff">Share</Text></Action>
      <Action $x={1914} $y={1115} $gap={9}><Text size={18.5} w={43} color="#fff">Reps</Text><Icon of={swap} w={16} h={15} c="#fff" sw={0.7} /><Text size={18.5} w={45} weight={700} color="#fff">Time</Text></Action>
      <Action $x={1910} $y={1211}><Icon of={plus} w={23} h={23} c="#fff" sw={0.8} /><Text size={18.5} w={150} color="#fff">Add a custom set</Text></Action>
      <Action $x={1905} $y={1273}><Icon of={plus} w={23} h={23} c="#fff" sw={0.8} /><Text size={18.5} w={130} color="#fff">Select exercise</Text></Action>
      <Icon of={flame} x={2066} y={1351} w={20} h={24} c={GOLD} />
      <Icon of={flame} x={2066} y={1391} w={20} h={24} c={GOLD} />
      <Text x={2094} base={1412} size={23} w={30} weight={700} color={GOLD}>68</Text>
      <Action $x={1418} $y={1541}><Icon of={plus} w={23} h={23} c="#fff" sw={0.8} /><Text size={22} w={107} color="#fff">Add Video</Text></Action>
      <Text x={1739} base={1633} size={38.5} weight={700}>8</Text>
      <Text x={1795} base={1633} size={38.5} w={80} weight={700}>reps</Text>
      <Text x={1927.5} base={1633} size={38.5} w={49} weight={700}>50</Text>
      <Text x={1984} base={1633} size={38.5} w={48} weight={300}>lbs</Text>
      <Band $x={2217} $y={0} />
      <Icon of={gear} x={2225} y={528} w={24} h={24} c="#fff" sw={1} />
      <Icon of={heartPlus} x={2245} y={1269} w={24} h={22} c="#fff" />
    </>
  );
}

function SpotMe() {
  return (
    <>
      <Title x={2584} w={350}>Spot Me Page</Title>
      <Slider $x={2588} $y={166}><Track $w={131} $c="#8cc0ee" /><Thumb /><Track $w={131} $c="#e6edf5" /></Slider>
      <Icon of={male} x={2692} y={223} w={25} h={25} />
      <Icon of={female} x={2696} y={280} w={16} h={26} />
      <Icon of={mapPin} x={2696.5} y={335} w={15} h={24} />
      <Icon of={female} x={2589} y={921} w={16} h={26} />
      <Text x={2621} base={944} size={22.5} w={74} color={GREY}>Female</Text>
      <Icon of={male} x={2776} y={923} w={25} h={25} />
      <Text x={2811} base={944} size={22.5} w={49} color={GREY}>Male</Text>
      <MuscleColumn $x={2575} $y={997} $pad={19}>
        {[["Legs", 49], ["Biceps", 69], ["Triceps", 73], ["Back", 51]].map(([t, w]) => <Text key={t} size={22.5} w={w} color={GREY}>{t}</Text>)}
      </MuscleColumn>
      <MuscleColumn $x={2745} $y={997} $pad={19}>
        {[["Chest", 61], ["Shoulder", 93.5], ["Neck", 53], ["Abs", 40]].map(([t, w]) => <Text key={t} size={22.5} w={w} color={GREY}>{t}</Text>)}
      </MuscleColumn>
      <Card $x={2517} $y={1178}>
        <CardHead>
          <Avatar />
          <Who><Text size={22.5} w={122} weight={600} color={GOLD}>John Blaze</Text><Text size={32} w={223} weight={600}>7:00-11:00 AM</Text></Who>
        </CardHead>
        <CardRow><Text size={19.5} w={133} color={GREY}>Big Billy’s IRON</Text><Icon of={board} w={20} h={24} sw={1.4} /></CardRow>
        <CardRow><Text size={19.5} w={203} color={GREY}>Duncan Student Center</Text><Icon of={mapPin} w={15} h={24} /></CardRow>
        <CardRow><Text size={19.5} w={169} color={RED}>Cancel Acceptance</Text><Icon of={cross} w={24} h={24} /></CardRow>
      </Card>
      <Done x={2514} y={1426} />
      <Wheel $x={2582} $y={1482}>
        {TIMES.map(([skip, ...cells], i) => (
          <WheelColumn key={i} $skip={skip}>
            {cells.map(([t, s, w]) => <Text key={t} size={s} w={w} weight={600} color={s === 31 ? "#000" : GREY}>{t}</Text>)}
          </WheelColumn>
        ))}
      </Wheel>
      <Band $x={3048.5} $y={11} $h={1519} />
      <WheelList $x={3099} $y={1576}>
        {MUSCLES.map(([t, s, w], i) => <Text key={t} size={s} w={w} weight={600} color={i === 3 ? "#000" : GREY}>{t}</Text>)}
      </WheelList>
      <Done x={3010} y={1567} />
    </>
  );
}

function GroupFeed() {
  return (
    <>
      <Title x={3438} w={432}>Group Feed Page</Title>
      <Disc $x={3435} $y={137} $d={50} />
      <PackIcon $x={3443} $y={146.5} $s={34}><MdMessage /></PackIcon>
      <Icon of={circlePlus} x={3757} y={105} w={24} h={24} c="#333" sw={1} />
      <Icon of={chatDots} x={3857} y={119} w={24} h={21} />
      <Icon of={chat} x={3680} y={150} w={24} h={21} />
      <Rule $x={3604} $y={196} $w={49} />
      <Icon of={hills} x={3448} y={254} w={32} h={24} />
      <Rule $x={3435} $y={292} $w={51} />
      <Icon of={picture} x={3696} y={247} w={36} h={36} c="#200" sw={1.6} />
      <Icon of={columns} x={3435} y={337} w={24} h={24} />
      <Pill $x={3604} $y={328} $w={54} $h={56} $r={0} />
      <Icon of={chart} x={3692} y={346} w={57} h={39} c={RED} sw={2.6} />
      <Icon of={roundLock} x={3437.5} y={497} w={28} h={36} sw={1.3} />
      <Icon of={circleLock} x={3733} y={497} w={36} h={36} sw={1.3} />
      <Icon of={lock} x={3766} y={543} w={18} h={24} c={HOT} sw={3.5} />
      <Rule $x={3571} $y={545.5} $w={54} $r={-1} />
      <Icon of={lock} x={3547} y={563} w={65} h={84} c={HOT} sw={3.7} />
      <Icon of={ellipsis} x={3435} y={622} w={24} h={6} />
      <Icon of={circleTick} x={3696} y={613} w={24} h={24} c="#999" sw={1} />
      <Icon of={personPlus} x={3439} y={673} w={24} h={24} />
      <Rule $x={3424.5} $y={714} $w={54} $r={-1} />
      <Icon of={megaphone} x={3559} y={735} w={36} h={30} c={RED} sw={1.4} />
      <Rule $x={3421} $y={781.5} $w={54} $r={-1} />
      <Icon of={camera} x={3430} y={817} w={24} h={19} />
      <Rule $x={3418} $y={863} $w={54} $r={-1} />
      <Icon of={mic} x={3436} y={908} w={18} h={24} />
      <Rule $x={3418} $y={949.5} $w={54} $r={-1} />
      <Icon of={micSlim} x={3525.5} y={908} w={11} h={24} sw={1.3} />
      <Icon of={circleCrown} x={3433} y={990} w={24} h={24} />
      <Icon of={crownFull} x={3519} y={985} w={24} h={22} c={AMBER} />
      <Icon of={crownLine} x={3595} y={986.5} w={24} h={18} sw={1.2} />
      <Icon of={crownSoft} x={3583} y={1017} w={24} h={22} c={AMBER} sw={1.3} />
      <Rule $x={3504.5} $y={1026.5} $w={54} $r={-1} />
      <Icon of={upload} x={3538} y={1065} w={18} h={24} c={RED} />
      <Icon of={trash} x={3451} y={1106} w={24} h={24} c={RED} />
      <Icon of={lock} x={3569.5} y={1264} w={64} h={85} c={RED} sw={3.7} />
      <Icon of={shieldGold} x={3635} y={1512} w={32} h={36} c={GOLD} sw={1.8} />
      <Icon of={crownSoft} x={3971} y={1682} w={24} h={22} c={GOLD} sw={1} />
      <Band $x={3970} $y={0} />
      <Icon of={chart} x={3986} y={338} w={24} h={16} c="#fff" sw={2.5} />
    </>
  );
}

function Notifications() {
  return (
    <>
      <Title x={4373} w={427}>Notification Page</Title>
      <Icon of={boldTick} x={4372.5} y={143} w={18} h={13} sw={2.2} />
      <Rule $x={4527} $y={177} $w={67} />
      <Icon of={cross} x={4374} y={216} w={19} h={19} sw={1.3} />
      <Icon of={cross} x={4552} y={209} w={16} h={16} c="#666" sw={1.5} />
      <Rule $x={4533} $y={254} $w={61} $r={2} />
      <Pill $x={4369} $y={285} $w={70} $h={20} $r={10} $bg={GOLD}><Text size={12} w={39}>Accept</Text></Pill>
      <Icon of={tick} x={4544} y={287} w={24} h={24} />
      <Rule $x={4548} $y={326} $w={37} />
      <Pill $x={4369} $y={355} $w={70} $h={20} $r={10} $bg={RED}><Text size={12} w={41}>Decline</Text></Pill>
      <Icon of={cross} x={4544} y={359} w={24} h={24} />
      <Rule $x={4533} $y={408.5} $w={52} $r={-1} />
      <Icon of={dumbbell} x={4299} y={422} w={30} h={30} c={GOLD} sw={1.3} />
      <ST x={4442.7} base={440} />
      <Icon of={crew} x={4292} y={501} w={30} h={30} c={GOLD} sw={1.3} />
      <ST x={4443.7} base={533} />
      <Band $x={4931} $y={0} />
    </>
  );
}

const LogoPlate = styled(Placed)`
  display: flex;
  align-items: center;
  justify-content: center;
  width: 100px;
  height: 100px;
  background: #f8f9ff;
`;
const Wordmark = styled(Placed)`
  font-family: Roboto, sans-serif;
  font-weight: 500;
  font-size: 100px;
  line-height: 117px;
  letter-spacing: 7px;
  color: ${RED};
  transform: scaleX(0.85);
  transform-origin: 0 0;
`;

function NotUsed() {
  return (
    <>
      <Title x={5303} w={238}>Not Used</Title>
      <Disc $x={5299} $y={137} $d={50} />
      <Icon of={barbell} x={5305.5} y={150} w={37} h={25} />
      <Icon of={ranks} x={5313} y={483} w={36} h={24} sw={1.3} />
      <Icon of={plane} x={5317} y={644} w={25} h={25} />
      <Band $x={5591} $y={0} />
      <LogoPlate $x={6025} $y={563}><Icon of={emblem} w={88} h={74} c={RED} /></LogoPlate>
      <Icon of={emblem} x={5921} y={1061} w={78} h={66} c={RED} />
      <Wordmark $x={5996} $y={1045}>potMe</Wordmark>
      <Band $x={6374} $y={0} $w={96} $h={1482} />
    </>
  );
}

function Schedule() {
  return (
    <>
      <Pill $x={6944} $y={50} $w={335} $h={40} $r={10} $align="flex-start" $pad="0 0 0 10px"><Text size={16.5} w={272}>Drink shake within 10 mins of workout</Text></Pill>
      <Text x={6998} base={177} size={16.5} w={116.5} color={GREY}>June 18th, 2020</Text>
      <Icon of={board} x={7237} y={152} w={20} h={24} sw={1.4} />
      <Text x={7270} base={172.6} size={20} w={113} color={GREY}>Link Workout</Text>
      <Text x={7422} base={220} size={23} w={53} weight={600} color={GOLD}>Tues</Text>
      <Icon of={pinBlack} x={7295} y={221} w={30} h={34} />
      <Icon of={pencil} x={7336} y={225} w={24} h={24} />
      <Text x={6974} base={265} size={23} w={177} weight={600}>Get Some Sleep</Text>
      <Icon of={pinGold} x={7449} y={270.5} w={23} h={27.5} c={AMBER} />
      <Text x={7038} base={359} size={23} w={105} weight={600}>Add Time</Text>
      <Text x={7323} base={359} size={23} w={52} weight={600}>Thur</Text>
      <Text x={7038} base={403.6} size={20} w={91} color={GREY}>Add Focus</Text>
      <Icon of={board} x={7039} y={427} w={20} h={24} sw={1.4} />
      <Text x={7071} base={447} size={20} w={113.5} color={GREY}>Link Workout</Text>
      <Pill $x={7037} $y={471} $w={335} $h={40} $r={10} $align="flex-start" $pad="0 0 0 10px"><Text size={16.5} w={75} color={GREY}>Add Notes</Text></Pill>
      <Rule $x={7016.5} $y={520} $w={376} $t={2} $c="#e6e6e6" />
      <Text x={7038} base={631} size={23} w={177} weight={600}>Get Some Sleep</Text>
      <Text x={7329} base={631} size={23} w={43} weight={600}>Sun</Text>
      <Text x={6976} base={675} size={20} w={247}>Chest &amp; Triceps &amp; Shoulders</Text>
      <Rule $x={7016.5} $y={688} $w={376} $t={2} $c="#e6e6e6" />
    </>
  );
}

export default function App() {
  return (
    <Window>
      <Global />
      <Canvas>
        <Overall />
        <Home />
        <Profile />
        <SpotMe />
        <GroupFeed />
        <Notifications />
        <NotUsed />
        <Schedule />
      </Canvas>
    </Window>
  );
}
